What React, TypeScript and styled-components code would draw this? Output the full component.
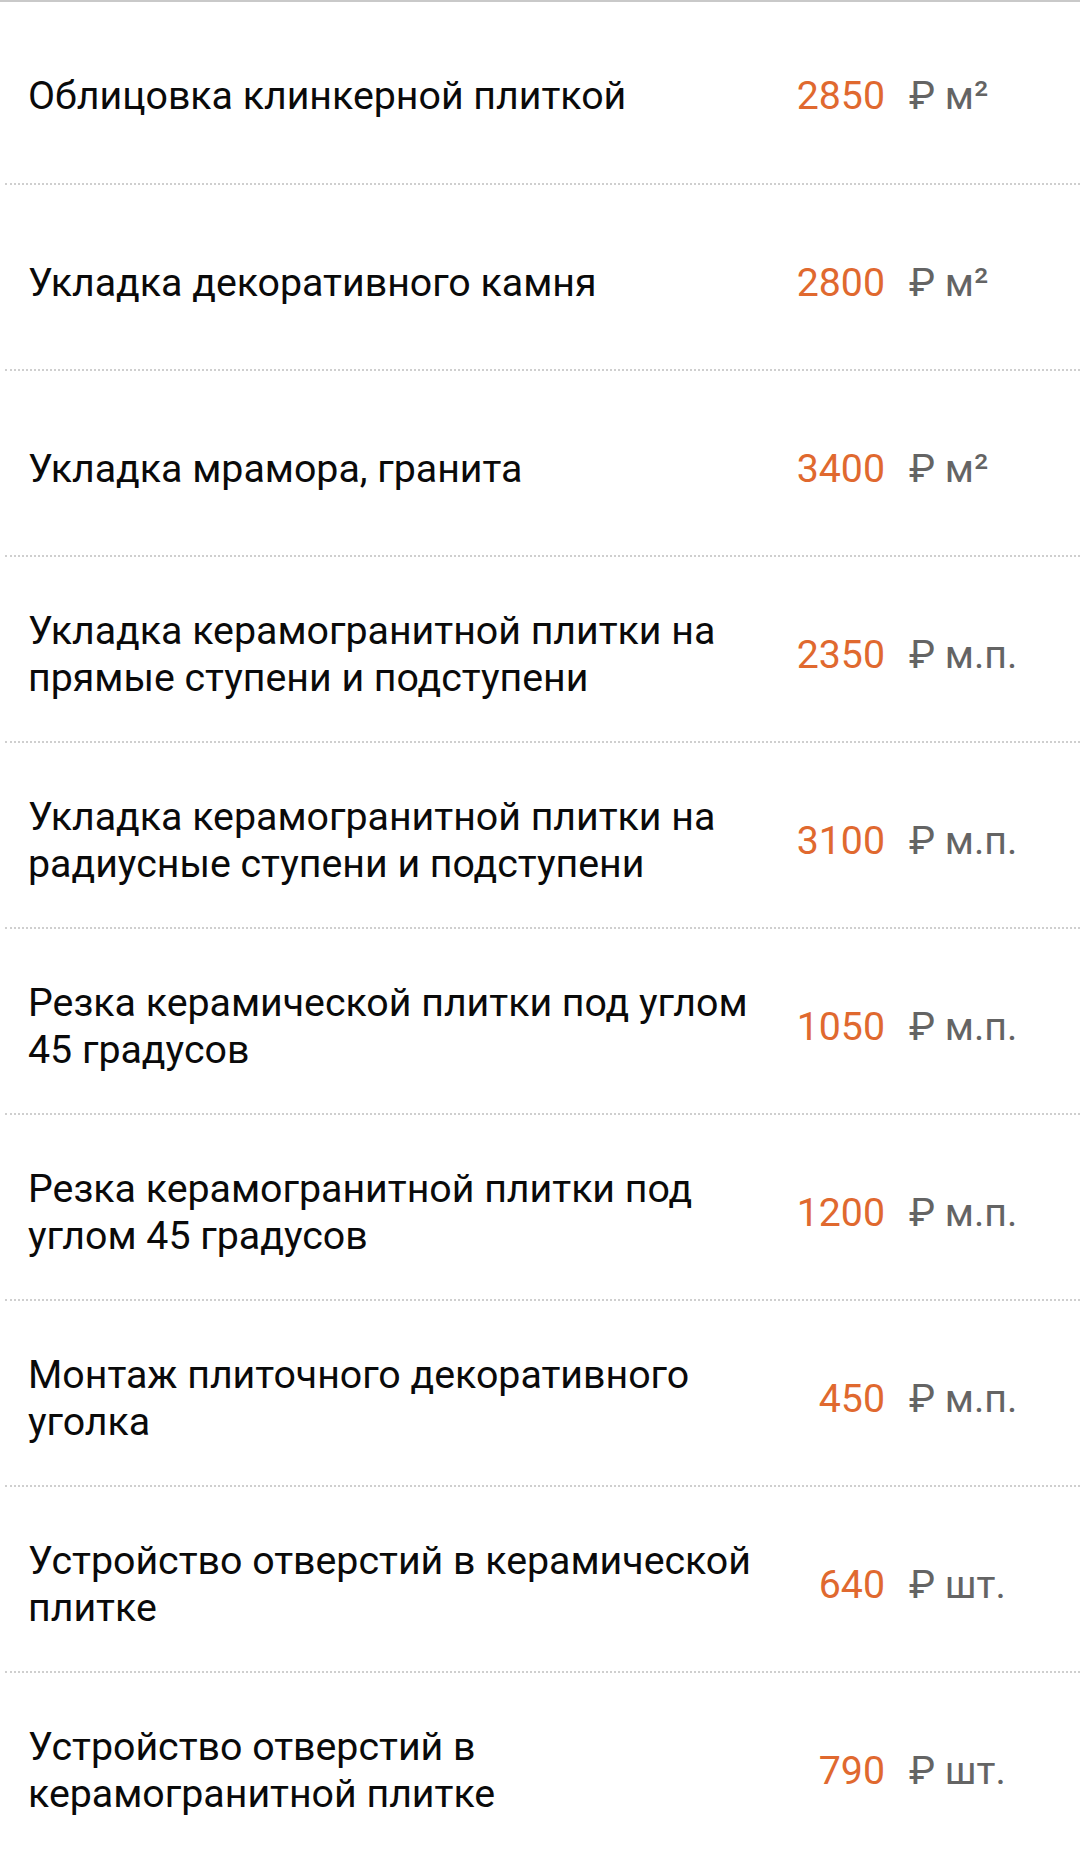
import React from "react";
import styled, { createGlobalStyle } from "styled-components";

const GlobalStyle = createGlobalStyle`
  html, body {
    margin: 0;
    padding: 0;
    background: #ffffff;
  }
  body {
    font-family: Roboto, "Noto Sans", "Liberation Sans", sans-serif;
    -webkit-font-smoothing: antialiased;
  }
`;

const List = styled.div`
  width: 1080px;
  border-top: 2px solid #c9c9c9;
  overflow: hidden;
`;

const Row = styled.div`
  box-sizing: border-box;
  height: 186px;
  margin-left: 5px;
  padding-left: 23px;
  padding-top: 12px;
  display: grid;
  grid-template-columns: 737px 120px 1fr;
  align-items: center;
  border-bottom: 2px dotted #cfcfcf;
  &:first-child {
    height: 183px;
    padding-top: 8px;
  }
`;

const Name = styled.div`
  font-size: 39.3px;
  line-height: 47px;
  color: #0a0a0a;
`;

const Price = styled.div`
  font-size: 39.3px;
  line-height: 47px;
  color: #e0692f;
  text-align: right;
  white-space: nowrap;
`;

const Unit = styled.div`
  font-size: 39.3px;
  line-height: 47px;
  color: #646464;
  white-space: nowrap;
  padding-left: 24px;
`;

type Item = { name: string; price: string; unit: string };

const items: Item[] = [
  { name: "Облицовка клинкерной плиткой", price: "2850", unit: "м²" },
  { name: "Укладка декоративного камня", price: "2800", unit: "м²" },
  { name: "Укладка мрамора, гранита", price: "3400", unit: "м²" },
  { name: "Укладка керамогранитной плитки на прямые ступени и подступени", price: "2350", unit: "м.п." },
  { name: "Укладка керамогранитной плитки на радиусные ступени и подступени", price: "3100", unit: "м.п." },
  { name: "Резка керамической плитки под углом 45 градусов", price: "1050", unit: "м.п." },
  { name: "Резка керамогранитной плитки под углом 45 градусов", price: "1200", unit: "м.п." },
  { name: "Монтаж плиточного декоративного уголка", price: "450", unit: "м.п." },
  { name: "Устройство отверстий в керамической плитке", price: "640", unit: "шт." },
  { name: "Устройство отверстий в керамогранитной плитке", price: "790", unit: "шт." },
];

export default function App() {
  return (
    <>
      <GlobalStyle />
      <List>
        {items.map((it) => (
          <Row key={it.name}>
            <Name>{it.name}</Name>
            <Price>{it.price}</Price>
            <Unit>₽ {it.unit}</Unit>
          </Row>
        ))}
      </List>
    </>
  );
}
